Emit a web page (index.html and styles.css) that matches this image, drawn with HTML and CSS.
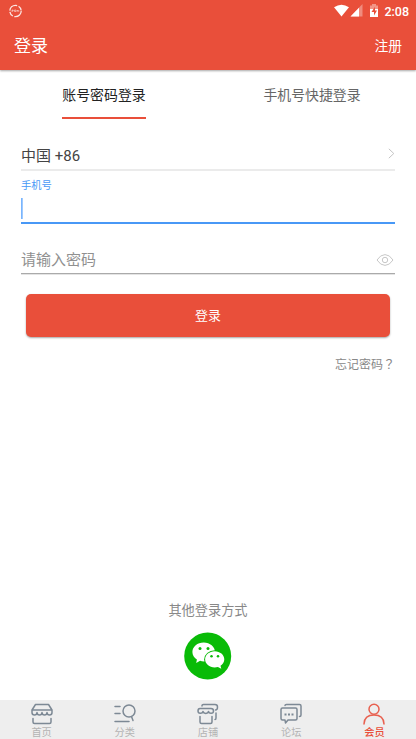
FILE: index.html
```html
<!DOCTYPE html>
<html lang="zh-CN">
<head>
<meta charset="utf-8">
<title>登录</title>
<link rel="stylesheet" href="styles.css">
</head>
<body>
<header class="header">
  <div class="status">
    <svg class="ring" width="14" height="14" viewBox="0 0 14 14" fill="none" stroke="#fff">
      <circle cx="6.500" cy="7" r="5.700" stroke-width="1.300" stroke-dasharray="10 1.500 5 1.400" stroke-opacity=".85"/>
      <path d="M3 8V6h1.200v1H3M5.500 6H7v1.500H5.500zM8.200 8V6l1.500 1.500V6" stroke-width=".7" stroke-opacity=".65"/>
    </svg>
    <svg class="signals" width="46" height="14" viewBox="0 0 46 14" fill="#fff">
      <path d="M0 3.300Q7.500-2 15 3.300L7.500 12.500z"/>
      <path d="M28.500 0v12.500H16.500z" fill-opacity=".35"/>
      <path d="M25 3.800v8.700h-8.500z"/>
      <path d="M36 1.500h2V0h4v1.500h2V5h-8z" fill-opacity=".4"/>
      <path d="M36 5h8v8h-8z"/>
      <path d="M41 2.800 37.500 8H40v3.500L43 6.500h-2z" fill="#e94f3a"/>
    </svg>
    <span class="time">2:08</span>
  </div>
  <div class="titlebar"><h1>登录</h1><a>注册</a></div>
</header>
<main class="main">
  <div class="tabs">
    <div class="tab active"><span>账号密码登录</span></div>
    <div class="tab"><span>手机号快捷登录</span></div>
  </div>
  <div class="form">
    <div class="country"><span>中国 +86</span>
      <svg width="7" height="11" viewBox="0 0 7 11" fill="none" stroke="#c4c4c4"><path d="m.8.8 5 4.700-5 4.700"/></svg>
    </div>
    <div class="phone"><label>手机号</label><div class="caret"></div></div>
    <div class="password"><span>请输入密码</span>
      <svg width="18" height="14" viewBox="0 0 18 14" fill="none" stroke="#c8c8c8"><path d="M1 7Q4.500 1.600 9 1.600T17 7Q13.500 12.400 9 12.400T1 7z"/><circle cx="9" cy="7" r="2.700"/></svg>
    </div>
    <div class="submit">登录</div>
    <div class="forgot">忘记密码<span lang="zh-TW">？</span></div>
  </div>
  <div class="other">
    <span>其他登录方式</span>
    <svg width="48" height="48" viewBox="0 0 48 48">
      <circle cx="23.700" cy="24" r="23.500" fill="#09bb07"/>
      <path d="M19.700 10.500c-6.300 0-11.300 4.200-11.300 9.500 0 3.200 1.700 5.800 4.500 7.500L12.200 31l3.900-2.200c1.200.4 2.400.6 3.600.6 6.300 0 11.300-4.200 11.300-9.400s-5-9.500-11.300-9.500z" fill="#fff"/>
      <ellipse cx="30.700" cy="27.500" rx="10.600" ry="9.300" fill="#09bb07"/>
      <path d="M30.700 19.200c-5.300 0-9.600 3.600-9.600 8.100s4.300 8.100 9.600 8.100c1.100 0 2.200-.2 3.200-.5l3.400 1.800-.8-3c2.300-1.500 3.800-3.700 3.800-6.400 0-4.500-4.300-8.100-9.600-8.100z" fill="#fff"/>
      <g fill="#09bb07"><circle cx="16" cy="16.500" r="1.500"/><circle cx="24" cy="16.500" r="1.500"/><circle cx="27.500" cy="24.200" r="1.250"/><circle cx="34" cy="24.200" r="1.250"/></g>
    </svg>
  </div>
</main>
<nav class="nav">
  <div class="item"><svg width="22" height="22" viewBox="0 0 22 22"><path d="M4.500 1.500h13L21 7v2.500c0 3.300-5 3.300-5 0 0 3.300-5 3.300-5 0 0 3.300-5 3.300-5 0 0 3.300-5 3.300-5 0V7zM1 7h20M2 15.500v3.500q0 1.500 1.500 1.500h15Q20 20.500 20 19v-3.500"/></svg><span>首页</span></div>
  <div class="item"><svg width="22" height="22" viewBox="0 0 22 22"><circle cx="15" cy="8" r="6"/><path d="m17.500 13.500 1.500 4M1 3.500h5M1 10.500h5M1 18.500h14"/></svg><span>分类</span></div>
  <div class="item"><svg width="22" height="22" viewBox="0 0 22 22"><path d="M3 5.500h11q2.500 0 2.500 2.500c0 3-4.500 3-5 .5-.5 2.500-5 2.500-5.500 0C5.500 11 1 11 1 8q0-2.500 2-2.500zM3 13.500V19q0 1.500 1.500 1.500h9Q15 20.500 15 19v-5.500M5 3V2.500q0-1 1.500-1H18q2.500 0 2.500 2.500 0 3-2 3M19 10v5q0 1.500-1 1.500"/></svg><span>店铺</span></div>
  <div class="item"><svg width="22" height="22" viewBox="0 0 22 22"><path d="M2.500 5h13Q17 5 17 6.500v9q0 1.500-1.500 1.500H8l-2.500 3L5 17H2.500Q1 17 1 15.500v-9Q1 5 2.500 5zM5 2.500q0-1 1.500-1h13q1.500 0 1.500 1.500v9q0 1.500-1.500 1.500"/><path class="dots" d="M4.500 11.500h2M8 11.500h2M11.500 11.500h2"/></svg><span>论坛</span></div>
  <div class="item current"><svg width="22" height="22" viewBox="0 0 22 22"><ellipse cx="11" cy="6.300" rx="5" ry="5"/><path d="M1 21c.2-6 4-9 10-9s9.800 3 10 9"/></svg><span>会员</span></div>
</nav>
</body>
</html>
```
FILE: styles.css
```css
* { box-sizing: border-box; }
body {
  margin: 0;
  height: 739px;
  display: flex;
  flex-direction: column;
  overflow: hidden;
  background: #fff;
  font-family: Roboto, "Noto Sans CJK SC", sans-serif;
}
svg { display: block; flex: none; }
.header {
  height: 70px;
  flex: none;
  background: #e94f3a;
  color: #fff;
  box-shadow: 0 1px 2px rgba(0, 0, 0, .35);
}
.status { height: 22px; display: flex; align-items: center; padding: 0 7px 0 9px; }
.signals { margin-left: auto; }
.time { font-size: 12.5px; font-weight: 500; line-height: 22px; padding-top: 1px; margin-left: 4px; }
.titlebar { height: 48px; display: flex; align-items: center; justify-content: space-between; padding: 0 14px; }
.titlebar h1 { margin: 0; padding-top: 1px; font-size: 17px; font-weight: 400; line-height: 49px; }
.titlebar a { font-size: 13.8px; line-height: 48px; }
.main { flex: 1; display: flex; flex-direction: column; }
.tabs { display: grid; grid-template-columns: 1fr 1fr; height: 49px; }
.tab { display: flex; justify-content: center; font-size: 13.9px; line-height: 50px; color: #666; }
.tab.active { color: #222; }
.tab.active span { border-bottom: 2px solid #e94f3a; height: 49px; }
.form { padding: 0 21px; }
.country {
  height: 52px;
  display: flex;
  justify-content: space-between;
  align-items: flex-start;
  border-bottom: 2px solid #ebebeb;
  padding-top: 26px;
  font-size: 15px;
  line-height: 22px;
  color: #444;
}
.country svg { margin-top: 3px; }
.phone { height: 53px; border-bottom: 2px solid #4898f6; padding-top: 7px; }
.phone label { display: block; font-size: 10.3px; line-height: 15px; color: #4898f6; }
.caret { width: 2px; height: 21px; margin-top: 5px; background: linear-gradient(90deg, #64aaff, #b5d5fc); }
.password {
  height: 50px;
  display: flex;
  justify-content: space-between;
  align-items: flex-start;
  padding: 25px 1px 0 0;
  border-bottom: 1px solid #aaa;
  box-shadow: 0 1px 0 #e4e4e4;
  font-size: 15px;
  line-height: 22px;
  color: #909090;
}
.password svg { margin-top: 4px; }
.submit {
  height: 43px;
  margin: 20px 5px 0;
  border-radius: 5px;
  background: #e94f3a;
  box-shadow: 0 1px 2px rgba(0, 0, 0, .35);
  color: #fff;
  font-size: 13px;
  line-height: 43px;
  text-align: center;
}
.forgot { margin-top: 17px; text-align: right; font-size: 12px; line-height: 20px; color: #888; }
.forgot span { font-family: "Noto Sans CJK TC", sans-serif; }
.other {
  margin-top: auto;
  padding-bottom: 20px;
  display: flex;
  flex-direction: column;
  align-items: center;
  gap: 11px;
  font-size: 13.2px;
  line-height: 20px;
  color: #888;
}
.nav { height: 39px; flex: none; display: grid; grid-template-columns: repeat(5, 1fr); background: #eee; }
.item { display: flex; flex-direction: column; align-items: center; padding-top: 3px; font-size: 10.2px; line-height: 14px; color: #b3b3b3; }
.item svg { fill: none; stroke: #7d8995; stroke-width: 1.5; stroke-linecap: round; stroke-linejoin: round; }
.item .dots { stroke-width: 2; stroke-linecap: butt; }
.item span { margin-top: 1px; }
.current { color: #e94f3a; font-weight: 500; }
.current svg { stroke: #e8604f; }
```
